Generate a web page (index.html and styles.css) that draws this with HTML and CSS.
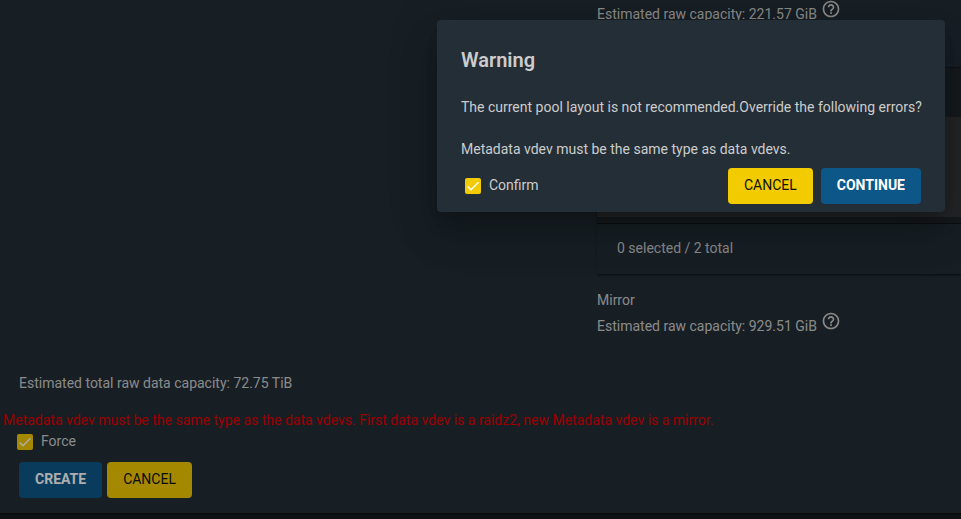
FILE: index.html
```html
<!DOCTYPE html>
<html lang="en">
<head>
    <meta charset="utf-8">
    <title>Pool Manager</title>
    <link rel="stylesheet" href="styles.css">
</head>
<body>
    <div class="page">
        <div class="vdev">
            <div class="capacity">
                <span>Estimated raw capacity: 221.57 GiB</span>
                <svg class="help" viewBox="0 0 24 24"><path d="M11 18h2v-2h-2v2zm1-16C6.48 2 2 6.48 2 12s4.48 10 10 10 10-4.48 10-10S17.52 2 12 2zm0 18c-4.41 0-8-3.59-8-8s3.59-8 8-8 8 3.59 8 8-3.59 8-8 8zm0-14c-2.21 0-4 1.79-4 4h2c0-1.1.9-2 2-2s2 .9 2 2c0 2-3 1.75-3 5h2c0-2.25 3-2.5 3-5 0-2.21-1.79-4-4-4z"/></svg>
            </div>
            <div class="disk-table">
                <div class="table-header"></div>
                <div class="table-rows"></div>
                <div class="table-footer">0 selected / 2 total</div>
            </div>
            <div class="vdev-type">Mirror</div>
            <div class="capacity">
                <span>Estimated raw capacity: 929.51 GiB</span>
                <svg class="help" viewBox="0 0 24 24"><path d="M11 18h2v-2h-2v2zm1-16C6.48 2 2 6.48 2 12s4.48 10 10 10 10-4.48 10-10S17.52 2 12 2zm0 18c-4.41 0-8-3.59-8-8s3.59-8 8-8 8 3.59 8 8-3.59 8-8 8zm0-14c-2.21 0-4 1.79-4 4h2c0-1.1.9-2 2-2s2 .9 2 2c0 2-3 1.75-3 5h2c0-2.25 3-2.5 3-5 0-2.21-1.79-4-4-4z"/></svg>
            </div>
        </div>
        <div class="total">Estimated total raw data capacity: 72.75 TiB</div>
        <div class="error">Metadata vdev must be the same type as the data vdevs. First data vdev is a raidz2, new Metadata vdev is a mirror.</div>
        <div class="checkbox force">
            <span class="box"><svg viewBox="0 0 24 24"><path d="M4.1 12.7 9 17.6 20.3 6.3"/></svg></span>
            <span>Force</span>
        </div>
        <div class="page-buttons">
            <button class="btn primary">CREATE</button>
            <button class="btn accent">CANCEL</button>
        </div>
    </div>
    <div class="overlay"></div>

    <div class="dialog">
        <h1>Warning</h1>
        <p>The current pool layout is not recommended.Override the following errors?</p>
        <p>Metadata vdev must be the same type as data vdevs.</p>
        <div class="dialog-actions">
            <div class="checkbox">
                <span class="box"><svg viewBox="0 0 24 24"><path d="M4.1 12.7 9 17.6 20.3 6.3"/></svg></span>
                <span>Confirm</span>
            </div>
            <div class="dialog-buttons">
                <button class="btn accent">CANCEL</button>
                <button class="btn primary">CONTINUE</button>
            </div>
        </div>
    </div>
</body>
</html>
```
FILE: styles.css
```css
body {
    margin: 0;
    height: 519px;
    overflow: hidden;
    background: #171b20;
    color: #cccccc;
    font-family: Roboto, sans-serif;
    font-size: 14px;
    line-height: 20px;
}
.page {
    box-sizing: border-box;
    height: 515px;
    background: #232e37;
    border-bottom: 2px solid #10151a;
}
.overlay {
    position: absolute;
    inset: 0;
    background: rgba(0, 0, 0, 0.32);
}
.vdev {
    margin-left: 597px;
    height: 373px;
}
.capacity {
    display: flex;
    height: 26px;
    gap: 4px;
}
.capacity span {
    padding-top: 4px;
}
.help {
    width: 20px;
    height: 20px;
    margin-top: -1px;
    fill: #cccccc;
}
.disk-table {
    margin-top: 41px;
    border-top: 1px solid #151b20;
    border-bottom: 1px solid #151b20;
    box-shadow: 0 1px 2px rgba(0, 0, 0, 0.3);
}
.table-header {
    height: 49px;
    background: #20272d;
}
.table-rows {
    height: 100px;
    background: #34373a;
}
.table-footer {
    box-sizing: border-box;
    height: 57px;
    padding: 21px 20px 0;
    background: linear-gradient(#20262b 6px, #11171b 6px, #11171b 7px, transparent 7px);
}
.vdev-type {
    margin: 15px 0 2px;
    height: 20px;
}
.total {
    padding-left: 19px;
}
.error {
    margin: 18px 0 9px 3px;
    height: 11px;
    line-height: 19px;
    color: #e00000;
    white-space: nowrap;
}
.checkbox {
    display: flex;
    align-items: center;
    gap: 8px;
}
.force {
    height: 20px;
    margin-left: 17px;
}
.box {
    width: 16px;
    height: 16px;
    margin-top: 1px;
    border-radius: 2px;
    background: #f2cb00;
}
.box svg {
    display: block;
    width: 16px;
    height: 16px;
    fill: none;
    stroke: #fff;
    stroke-width: 2.2;
}
.page-buttons {
    display: flex;
    gap: 5px;
    margin: 11px 0 0 19px;
}
.btn {
    height: 36px;
    padding: 0 16px 2px;
    border: none;
    border-radius: 4px;
    font: 500 14px/34px Roboto, sans-serif;
    white-space: nowrap;
}
.primary {
    background: #0d5788;
    color: #fff;
    font-weight: 700;
}
.accent {
    background: #f2cb00;
    color: #111;
    font-weight: 400;
}
.dialog {
    position: absolute;
    left: 437px;
    top: 20px;
    box-sizing: border-box;
    width: 508px;
    height: 192px;
    padding: 24px;
    border-radius: 4px;
    background: #242e36;
    box-shadow: 0 11px 15px -7px rgba(0, 0, 0, 0.2), 0 24px 38px 3px rgba(0, 0, 0, 0.14), 0 9px 46px 8px rgba(0, 0, 0, 0.12);
}
.dialog h1 {
    margin: 0 0 21px;
    font-size: 20px;
    font-weight: 600;
    line-height: 32px;
}
.dialog p {
    margin: 0 0 22px;
    white-space: nowrap;
}
.dialog-actions {
    display: flex;
    justify-content: space-between;
    margin-top: -13px;
    padding-left: 4px;
}
.dialog-actions .checkbox {
    height: 34px;
}
.dialog-buttons {
    display: flex;
    gap: 8px;
}
```
